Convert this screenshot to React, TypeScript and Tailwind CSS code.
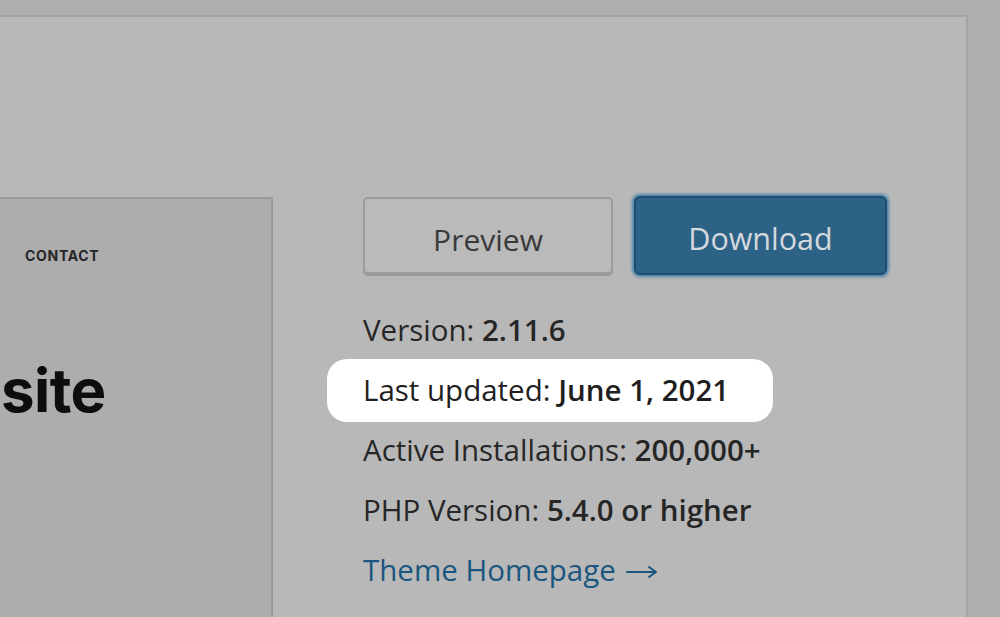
const rows = [
  { label: 'Version:', value: '2.11.6' },
  { label: 'Last updated:', value: 'June 1, 2021', highlight: true },
  { label: 'Active Installations:', value: '200,000+' },
  { label: 'PHP Version:', value: '5.4.0 or higher' },
];

const ThemePreview = () => (
  <div className="w-[273px] shrink-0 self-stretch border-2 border-l-0 border-b-0 border-[#999999] bg-[#adadad] font-['Inter',sans-serif]">
    <div className="pl-[25px] pt-[46px] text-[14px] font-bold tracking-[0.05em] text-[#262626]">
      CONTACT
    </div>
    <div className="mt-[94px] pl-[1px] text-[60px] font-bold leading-none tracking-[-0.01em] text-[#0d0d0d]">
      site
    </div>
  </div>
);

const App = () => {
  return (
    <div className="h-[617px] w-[1000px] overflow-hidden bg-[#afafaf] pt-[15px] font-['Open_Sans',sans-serif]">
      <div className="flex h-[620px] w-[968px] border-t-2 border-r-2 border-[#a4a4a4] bg-[#b8b8b8] pt-[180px]">
        <ThemePreview />

        <div className="ml-[90px] flex flex-col">
          <div className="flex gap-[21px]">
            <button className="h-[77px] w-[250px] rounded-[5px] border-2 border-[#9c9c9c] bg-[#bababa] pt-[7px] text-[30px] text-[#393939] shadow-[0_2px_0_#9a9a9a]">
              Preview
            </button>
            <button className="-mt-px h-[79px] w-[253px] rounded-[6px] border-2 border-[#1f4d72] bg-[#2d6287] pt-[6px] text-[30.5px] text-[#d3d8dc] shadow-[0_0_3px_2px_#4a84ab]">
              Download
            </button>
          </div>

          <div className="mt-[25px] flex flex-col text-[29.5px]">
            {rows.map((row) => (
              <div
                key={row.label}
                className={
                  row.highlight
                    ? '-mx-[36px] -my-[1.5px] flex h-[63px] w-[446px] items-center rounded-[20px] bg-white pl-[36px] text-[#1f1f1f]'
                    : 'flex h-[60px] items-center text-[#262626]'
                }
              >
                <span>{row.label}&nbsp;</span>
                <span className="font-semibold">{row.value}</span>
              </div>
            ))}
            <a className="flex h-[60px] items-center gap-[10px] text-[#1b5680]">
              Theme Homepage
              <svg width="32" height="14" viewBox="0 0 32 14" className="mt-[3px]">
                <path
                  d="M1 7 H30 M23 2 L30 7 L23 12"
                  fill="none"
                  stroke="#1b5680"
                  strokeWidth="2"
                  strokeLinecap="round"
                  strokeLinejoin="round"
                />
              </svg>
            </a>
          </div>
        </div>
      </div>
    </div>
  );
};

export default App;
